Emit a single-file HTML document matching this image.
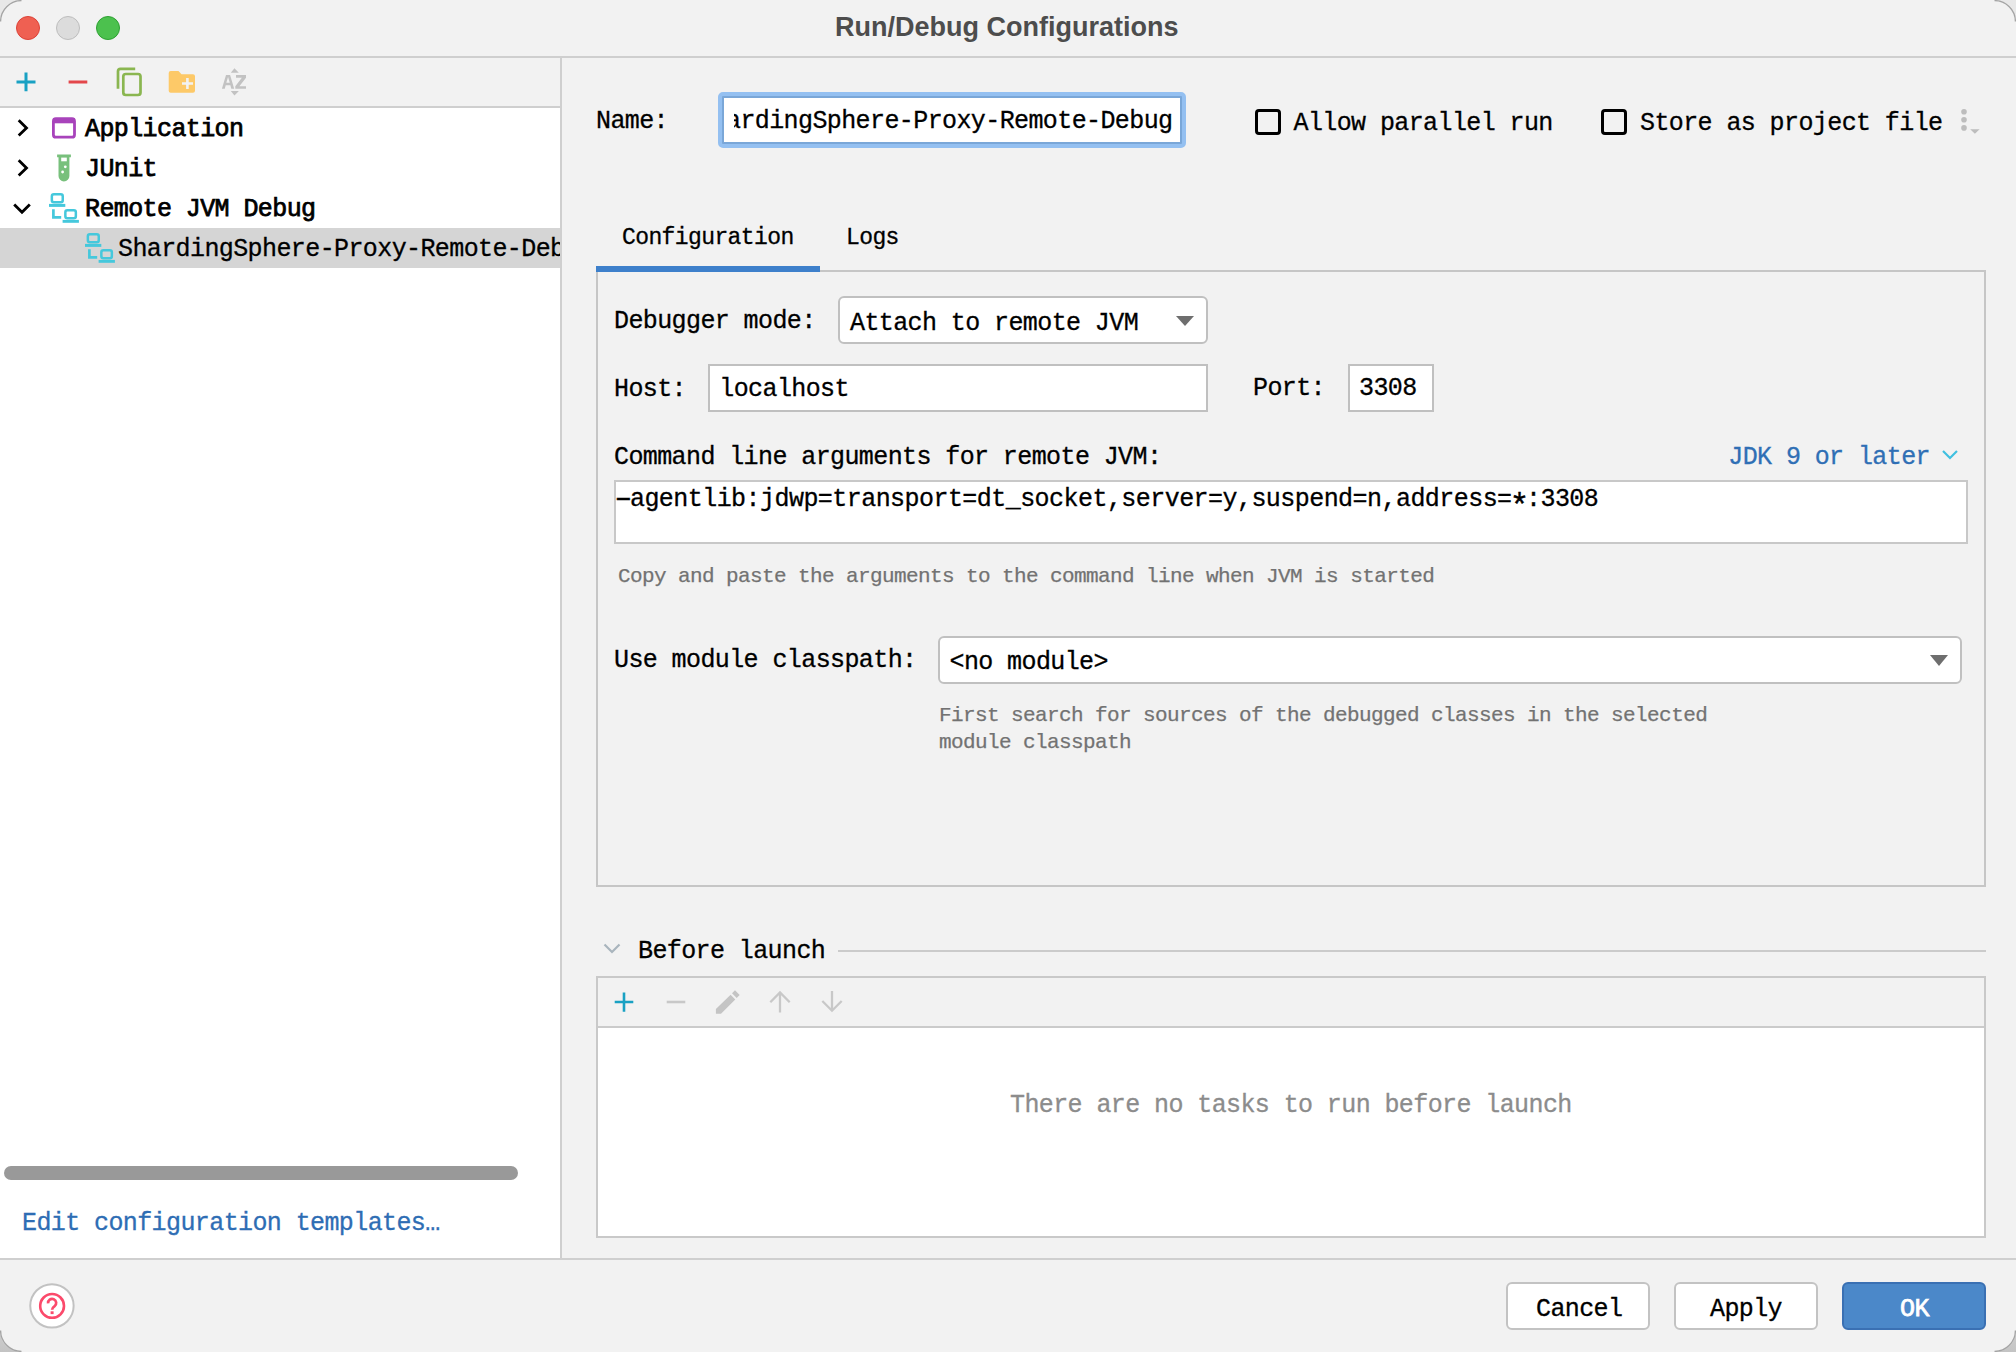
<!DOCTYPE html>
<html><head><meta charset="utf-8">
<style>
html,body{margin:0;padding:0;}
body{width:2016px;height:1352px;overflow:hidden;position:relative;background:linear-gradient(to bottom,#e8e8e8 0,#f0f0f0 1250px,#c4c4c4 1352px);}
#win{position:absolute;left:0;top:0;width:2016px;height:1352px;border-radius:21px;overflow:hidden;background:#f2f2f2;}
#edge{position:absolute;left:0;top:0;width:2014px;height:1350px;border-radius:22px;border:1px solid rgba(0,0,0,0.22);pointer-events:none;}
.a{position:absolute;}
.t{position:absolute;white-space:pre;line-height:25px;font-family:"Liberation Mono",monospace;font-size:25px;letter-spacing:-0.6px;color:#000;-webkit-text-stroke:0.3px currentColor;}
.s{position:absolute;white-space:pre;line-height:21px;font-family:"Liberation Mono",monospace;font-size:21px;letter-spacing:-0.6px;color:#727272;-webkit-text-stroke:0.25px currentColor;}
.b{-webkit-text-stroke:0.75px currentColor;}
svg{position:absolute;overflow:visible;}
</style></head>
<body><div id="win">
<!-- title bar -->
<svg style="left:0;top:0" width="140" height="56">
  <circle cx="28" cy="28" r="11.5" fill="#ef6052" stroke="#dc4238" stroke-width="1"/>
  <circle cx="68" cy="28" r="11.5" fill="#dcdcdc" stroke="#bdbdbd" stroke-width="1"/>
  <circle cx="108" cy="28" r="11.5" fill="#4cc14e" stroke="#2ea032" stroke-width="1"/>
</svg>
<div class="a" style="left:835px;top:14px;font:bold 27px/27px 'Liberation Sans',sans-serif;color:#4d4d4d;white-space:pre">Run/Debug Configurations</div>
<div class="a" style="left:0;top:56px;width:2016px;height:2px;background:#cfcfcf"></div>

<!-- left panel -->
<div class="a" style="left:0;top:106px;width:560px;height:2px;background:#cfcfcf"></div>
<div class="a" style="left:0;top:108px;width:560px;height:1150px;background:#fff"></div>
<div class="a" style="left:560px;top:58px;width:2px;height:1200px;background:#cfcfcf"></div>
<div class="a" style="left:0;top:228px;width:560px;height:40px;background:#d5d5d5"></div>


<!-- left toolbar icons -->
<svg style="left:0;top:58px" width="260" height="48" viewBox="0 58 260 48">
  <path d="M26 72.5V91.3M16.5 82H35.5" stroke="#19a1c3" stroke-width="3" fill="none"/>
  <path d="M68.6 82H87.3" stroke="#e3474b" stroke-width="3" fill="none"/>
  <path d="M118 88.7V71.3A2.5 2.5 0 0 1 120.5 68.8H135.2" stroke="#8ab650" stroke-width="2.7" fill="none"/>
  <rect x="123.3" y="74" width="17.2" height="21" rx="2.5" stroke="#8ab650" stroke-width="2.7" fill="none"/>
  <path d="M168.7 73A2 2 0 0 1 170.7 71H178.5L181.5 74.2H193A2 2 0 0 1 195 76.2V90.8A2 2 0 0 1 193 92.8H170.7A2 2 0 0 1 168.7 90.8Z" fill="#fdc968"/>
  <path d="M187.4 78V89M182 83.5H193" stroke="#f2f2f2" stroke-width="2.6" fill="none"/>
  <path fill-rule="evenodd" d="M221.9 88.8L226 75.1H230.1L234.2 88.8H231.3L230.4 85.3H225.7L224.8 88.8Z M226.3 82.7H229.8L228.05 76.9Z" fill="#c2c2c2"/>
  <path d="M236 75.1H246V77.7L239.4 86.2H246V88.8H235.3V86.2L241.9 77.7H236Z" fill="#c2c2c2"/>
  <path d="M230.8 72.8L234.45 68.3L238.8 72.8Z M230.8 91L234.45 95.4L238.9 91Z" fill="#c2c2c2"/>
</svg>

<!-- tree -->
<svg style="left:0;top:108px" width="100" height="160" viewBox="0 108 100 160">
  <path d="M18.7 120.3L26.5 127.9L18.7 135.4" stroke="#000" stroke-width="2.8" fill="none"/>
  <path d="M18.7 160.3L26.5 167.9L18.7 175.4" stroke="#000" stroke-width="2.8" fill="none"/>
  <path d="M14.2 204.4L22 212.2L29.8 204.4" stroke="#000" stroke-width="2.8" fill="none"/>
  <rect x="53.4" y="118.7" width="21.1" height="18.5" rx="2.5" stroke="#a843bb" stroke-width="2.8" fill="none"/>
  <rect x="53" y="118.3" width="22" height="5" fill="#a843bb"/>
  <path d="M57.1 154.6H70.9V157.2H69.4V176A5.45 5.45 0 0 1 58.5 176V157.2H57.1Z" fill="#78c07c"/>
  <rect x="61.2" y="157.6" width="5.6" height="3.7" fill="#fff"/>
  <circle cx="65.3" cy="166.8" r="1.4" fill="#fff"/>
  <circle cx="62.6" cy="172" r="1.4" fill="#fff"/>
  <g id="remoteicon" fill="none" stroke="#45c8dc">
    <rect x="51.85" y="194.35" width="10.9" height="8" rx="2" stroke-width="2.5"/>
    <rect x="49" y="203.9" width="16.3" height="3" fill="#45c8dc" stroke="none"/>
    <path d="M53.4 209.2V217.35H61.2" stroke-width="2.7"/>
    <rect x="65.35" y="210.15" width="10.5" height="8" rx="2" stroke-width="2.5"/>
    <rect x="62.6" y="219.9" width="16.3" height="2.9" fill="#45c8dc" stroke="none"/>
  </g>
  <use href="#remoteicon" x="36" y="40"/>
</svg>
<div class="t b" style="left:85px;top:117px">Application</div>
<div class="t b" style="left:85px;top:157px">JUnit</div>
<div class="t b" style="left:85px;top:196.5px">Remote JVM Debug</div>
<div class="a" style="left:0;top:228px;width:560px;height:40px;overflow:hidden">
  <div class="t" style="left:118px;top:8.5px">ShardingSphere-Proxy-Remote-Debug</div>
</div>

<!-- scrollbar & link -->
<div class="a" style="left:4px;top:1166px;width:514px;height:14px;border-radius:7px;background:#999"></div>
<div class="t" style="left:22px;top:1211.25px;color:#2e6db4">Edit configuration templates…</div>

<!-- bottom bar -->
<div class="a" style="left:0;top:1258px;width:2016px;height:2px;background:#cfcfcf"></div>
<svg style="left:0;top:1260px" width="100" height="92" viewBox="0 1260 100 92">
  <circle cx="51.95" cy="1305.85" r="21.7" fill="#fff" stroke="#c2c2c2" stroke-width="2"/>
  <circle cx="52.1" cy="1305.9" r="11.9" fill="none" stroke="#fb4a6b" stroke-width="2.6"/>
  <path d="M48.1 1303.3A4.05 4.05 0 1 1 54.6 1306.1C53.1 1307.2 52.1 1308 52.1 1309.8" stroke="#fb4a6b" stroke-width="2.7" fill="none"/>
  <rect x="50.6" y="1311.3" width="3" height="2.8" fill="#fb4a6b"/>
</svg>
<div class="a" style="left:1506px;top:1282px;width:140px;height:44px;border:2px solid #c3c3c3;border-radius:6px;background:#fff"></div>
<div class="a" style="left:1674px;top:1282px;width:140px;height:44px;border:2px solid #c3c3c3;border-radius:6px;background:#fff"></div>
<div class="a" style="left:1842px;top:1282px;width:140px;height:44px;border:2px solid #3a70b3;border-radius:6px;background:#4b88c9"></div>
<div class="t" style="left:1536px;top:1296.65px">Cancel</div>
<div class="t" style="left:1710px;top:1296.85px">Apply</div>
<div class="t b" style="left:1900px;top:1296.85px;color:#fff">OK</div>

<!-- right: name row -->
<div class="t" style="left:596px;top:109px">Name:</div>
<div class="a" style="left:718px;top:92px;width:460px;height:48px;border:4px solid #94c0f1;border-radius:5px;background:#7aa7d8"></div>
<div class="a" style="left:724px;top:98px;width:456px;height:44px;background:#fff"></div>
<div class="a" style="left:734px;top:98px;width:446px;height:44px;overflow:hidden">
  <div class="t" style="left:-8px;top:10.5px">ardingSphere-Proxy-Remote-Debug</div>
</div>
<div class="a" style="left:1255px;top:109px;width:20px;height:20px;border:3px solid #000;border-radius:4px"></div>
<div class="t" style="left:1293.5px;top:110.5px">Allow parallel run</div>
<div class="a" style="left:1601px;top:109px;width:20px;height:20px;border:3px solid #000;border-radius:4px"></div>
<div class="t" style="left:1640px;top:110.5px">Store as project file</div>
<svg style="left:1950px;top:100px" width="40" height="40" viewBox="1950 100 40 40">
  <circle cx="1964" cy="111.8" r="2.8" fill="#bdbdbd"/>
  <circle cx="1964" cy="119.8" r="2.8" fill="#bdbdbd"/>
  <circle cx="1964" cy="127.9" r="2.8" fill="#bdbdbd"/>
  <path d="M1970.2 129.2H1979.6L1974.9 133.8Z" fill="#bdbdbd"/>
</svg>

<!-- tabs -->
<div class="t" style="left:622px;top:226.5px;font-size:23px;line-height:23px">Configuration</div>
<div class="t" style="left:846px;top:226.5px;font-size:23px;line-height:23px">Logs</div>
<div class="a" style="left:820px;top:270px;width:1166px;height:2px;background:#c6c6c6"></div>
<div class="a" style="left:596px;top:266px;width:224px;height:6px;background:#3e80cb"></div>
<div class="a" style="left:596px;top:272px;width:1386px;height:613px;border:2px solid #c6c6c6;border-top:none"></div>

<!-- debugger mode -->
<div class="t" style="left:614px;top:308.65px">Debugger mode:</div>
<div class="a" style="left:838px;top:296px;width:366px;height:44px;border:2px solid #c0c0c0;border-radius:6px;background:#fff"></div>
<div class="t" style="left:850px;top:311.15px">Attach to remote JVM</div>
<svg style="left:1170px;top:310px" width="30" height="20" viewBox="1170 310 30 20"><path d="M1176 316H1194L1185 326Z" fill="#6e6e6e"/></svg>

<div class="t" style="left:614px;top:376.65px">Host:</div>
<div class="a" style="left:708px;top:364px;width:496px;height:44px;border:2px solid #c0c0c0;background:#fff"></div>
<div class="t" style="left:719.3px;top:376.65px">localhost</div>
<div class="t" style="left:1253px;top:376.35px">Port:</div>
<div class="a" style="left:1348px;top:364px;width:82px;height:44px;border:2px solid #c0c0c0;background:#fff"></div>
<div class="t" style="left:1359px;top:376.35px">3308</div>

<div class="t" style="left:614px;top:444.65px">Command line arguments for remote JVM:</div>
<div class="t" style="left:1728.3px;top:444.85px;color:#2f6fb5">JDK 9 or later</div>
<svg style="left:1940px;top:445px" width="20" height="20" viewBox="1940 445 20 20"><path d="M1943 451L1950 458L1957 451" stroke="#40c0e0" stroke-width="2.2" fill="none"/></svg>
<div class="a" style="left:614px;top:480px;width:1350px;height:60px;border:2px solid #c8c8c8;background:#fff"></div>
<div class="t" style="left:615.5px;top:486.95px;letter-spacing:-0.55px"><span style="display:inline-block;transform:translateX(-0.3px) scaleX(1.85)">-</span>agentlib:jdwp=transport=dt_socket,server=y,suspend=n,address=<span style="display:inline-block;transform:translateY(8.5px) scale(1.3)">*</span>:3308</div>
<div class="s" style="left:618px;top:566px">Copy and paste the arguments to the command line when JVM is started</div>

<div class="t" style="left:614px;top:648.45px">Use module classpath:</div>
<div class="a" style="left:938px;top:636px;width:1020px;height:44px;border:2px solid #c0c0c0;border-radius:6px;background:#fff"></div>
<div class="t" style="left:949.5px;top:650.25px">&lt;no module&gt;</div>
<svg style="left:1925px;top:650px" width="30" height="20" viewBox="1925 650 30 20"><path d="M1930 655H1948L1939 666Z" fill="#6e6e6e"/></svg>
<div class="s" style="left:939px;top:704.7px">First search for sources of the debugged classes in the selected</div>
<div class="s" style="left:939px;top:731.8px">module classpath</div>

<!-- before launch -->
<svg style="left:600px;top:940px" width="24" height="16" viewBox="600 940 24 16"><path d="M604.5 944.5L612 952L619.5 944.5" stroke="#a9b5bd" stroke-width="2.2" fill="none"/></svg>
<div class="t" style="left:638px;top:938.65px">Before launch</div>
<div class="a" style="left:838px;top:950px;width:1148px;height:2px;background:#cbcbcb"></div>
<div class="a" style="left:596px;top:976px;width:1386px;height:258px;border:2px solid #c9c9c9;background:#fff"></div>
<div class="a" style="left:598px;top:978px;width:1386px;height:48px;background:#f2f2f2;border-bottom:2px solid #cbcbcb"></div>
<svg style="left:600px;top:980px" width="260" height="44" viewBox="600 980 260 44">
  <path d="M624 992.6V1011.7M614.7 1002H633.3" stroke="#19a1c3" stroke-width="2.6" fill="none"/>
  <path d="M666.7 1002H685.3" stroke="#c8c8c8" stroke-width="2.6" fill="none"/>
  <path d="M715.9 1013.7V1009L730.6 994.7L735.3 999.4L721 1013.7Z M732 993.3L735 990.3L739.7 995L736.7 998Z" fill="#c4c4c4"/>
  <path d="M780 1012.5V993.5M770.3 1002.2L780 992.5L789.7 1002.2" stroke="#c8c8c8" stroke-width="2.3" fill="none"/>
  <path d="M832 991V1010M822.3 1001L832 1010.7L841.7 1001" stroke="#c8c8c8" stroke-width="2.3" fill="none"/>
</svg>
<div class="t" style="left:1010px;top:1092.85px;color:#8c8c8c">There are no tasks to run before launch</div>

</div>
<svg style="left:0;top:0" width="2016" height="1352" viewBox="0 0 2016 1352"><path d="M0.6 21.5A20.9 20.9 0 0 1 21.5 0.6M1994.5 0.6A20.9 20.9 0 0 1 2015.4 21.5M2015.4 1330.5A20.9 20.9 0 0 1 1994.5 1351.4M21.5 1351.4A20.9 20.9 0 0 1 0.6 1330.5" fill="none" stroke="rgba(0,0,0,0.32)" stroke-width="1.3"/></svg>
</body></html>
